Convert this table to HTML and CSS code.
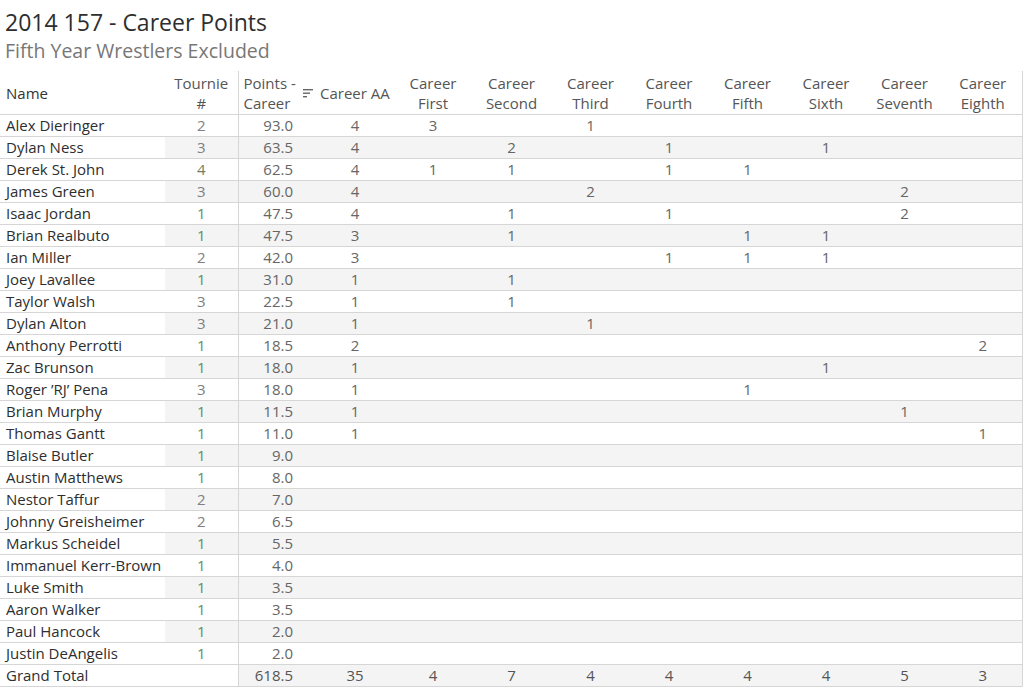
FILE: index.html
```html
<!DOCTYPE html>
<html>
<head>
<meta charset="utf-8">
<link rel="stylesheet" href="styles.css">
</head>
<body>
<div class="titles">
  <div class="title">2014 157 - Career Points</div>
  <div class="subtitle">Fifth Year Wrestlers Excluded</div>
</div>
<table class="grid">
  <colgroup>
    <col style="width:165px"><col style="width:73px"><col style="width:78px"><col style="width:78px">
    <col style="width:78px"><col style="width:79px"><col style="width:79px"><col style="width:78px">
    <col style="width:79px"><col style="width:78px"><col style="width:79px"><col style="width:78px">
  </colgroup>
  <thead>
    <tr>
      <th class="h-name">Name</th>
      <th class="h-c">Tournie<br>#</th>
      <th class="h-pts sep">Points -<br>Career</th>
      <th class="h-aa"><span class="aa-inner"><span class="sort"><svg width="11" height="9" viewBox="0 0 11 9"><rect x="0" y="0" width="10" height="1.4" fill="#666"/><rect x="0" y="3.5" width="7" height="1.4" fill="#666"/><rect x="0" y="7" width="4" height="1.4" fill="#666"/></svg></span>Career AA</span></th>
      <th class="h-c">Career<br>First</th>
      <th class="h-c">Career<br>Second</th>
      <th class="h-c">Career<br>Third</th>
      <th class="h-c">Career<br>Fourth</th>
      <th class="h-c">Career<br>Fifth</th>
      <th class="h-c">Career<br>Sixth</th>
      <th class="h-c">Career<br>Seventh</th>
      <th class="h-c last">Career<br>Eighth</th>
    </tr>
  </thead>
  <tbody>
    <tr><td class="name">Alex Dieringer</td><td class="t t2">2</td><td class="pts">93.0</td><td class="v">4</td><td class="v">3</td><td class="v"></td><td class="v">1</td><td class="v"></td><td class="v"></td><td class="v"></td><td class="v"></td><td class="v last"></td></tr>
    <tr class="band"><td class="name">Dylan Ness</td><td class="t t3">3</td><td class="pts">63.5</td><td class="v">4</td><td class="v"></td><td class="v">2</td><td class="v"></td><td class="v">1</td><td class="v"></td><td class="v">1</td><td class="v"></td><td class="v last"></td></tr>
    <tr><td class="name">Derek St. John</td><td class="t t4">4</td><td class="pts">62.5</td><td class="v">4</td><td class="v">1</td><td class="v">1</td><td class="v"></td><td class="v">1</td><td class="v">1</td><td class="v"></td><td class="v"></td><td class="v last"></td></tr>
    <tr class="band"><td class="name">James Green</td><td class="t t3">3</td><td class="pts">60.0</td><td class="v">4</td><td class="v"></td><td class="v"></td><td class="v">2</td><td class="v"></td><td class="v"></td><td class="v"></td><td class="v">2</td><td class="v last"></td></tr>
    <tr><td class="name">Isaac Jordan</td><td class="t t1">1</td><td class="pts">47.5</td><td class="v">4</td><td class="v"></td><td class="v">1</td><td class="v"></td><td class="v">1</td><td class="v"></td><td class="v"></td><td class="v">2</td><td class="v last"></td></tr>
    <tr class="band"><td class="name">Brian Realbuto</td><td class="t t1">1</td><td class="pts">47.5</td><td class="v">3</td><td class="v"></td><td class="v">1</td><td class="v"></td><td class="v"></td><td class="v">1</td><td class="v">1</td><td class="v"></td><td class="v last"></td></tr>
    <tr><td class="name">Ian Miller</td><td class="t t2">2</td><td class="pts">42.0</td><td class="v">3</td><td class="v"></td><td class="v"></td><td class="v"></td><td class="v">1</td><td class="v">1</td><td class="v">1</td><td class="v"></td><td class="v last"></td></tr>
    <tr class="band"><td class="name">Joey Lavallee</td><td class="t t1">1</td><td class="pts">31.0</td><td class="v">1</td><td class="v"></td><td class="v">1</td><td class="v"></td><td class="v"></td><td class="v"></td><td class="v"></td><td class="v"></td><td class="v last"></td></tr>
    <tr><td class="name">Taylor Walsh</td><td class="t t3">3</td><td class="pts">22.5</td><td class="v">1</td><td class="v"></td><td class="v">1</td><td class="v"></td><td class="v"></td><td class="v"></td><td class="v"></td><td class="v"></td><td class="v last"></td></tr>
    <tr class="band"><td class="name">Dylan Alton</td><td class="t t3">3</td><td class="pts">21.0</td><td class="v">1</td><td class="v"></td><td class="v"></td><td class="v">1</td><td class="v"></td><td class="v"></td><td class="v"></td><td class="v"></td><td class="v last"></td></tr>
    <tr><td class="name">Anthony Perrotti</td><td class="t t1">1</td><td class="pts">18.5</td><td class="v">2</td><td class="v"></td><td class="v"></td><td class="v"></td><td class="v"></td><td class="v"></td><td class="v"></td><td class="v"></td><td class="v last">2</td></tr>
    <tr class="band"><td class="name">Zac Brunson</td><td class="t t1">1</td><td class="pts">18.0</td><td class="v">1</td><td class="v"></td><td class="v"></td><td class="v"></td><td class="v"></td><td class="v"></td><td class="v">1</td><td class="v"></td><td class="v last"></td></tr>
    <tr><td class="name">Roger ’RJ’ Pena</td><td class="t t3">3</td><td class="pts">18.0</td><td class="v">1</td><td class="v"></td><td class="v"></td><td class="v"></td><td class="v"></td><td class="v">1</td><td class="v"></td><td class="v"></td><td class="v last"></td></tr>
    <tr class="band"><td class="name">Brian Murphy</td><td class="t t1">1</td><td class="pts">11.5</td><td class="v">1</td><td class="v"></td><td class="v"></td><td class="v"></td><td class="v"></td><td class="v"></td><td class="v"></td><td class="v">1</td><td class="v last"></td></tr>
    <tr><td class="name">Thomas Gantt</td><td class="t t1">1</td><td class="pts">11.0</td><td class="v">1</td><td class="v"></td><td class="v"></td><td class="v"></td><td class="v"></td><td class="v"></td><td class="v"></td><td class="v"></td><td class="v last">1</td></tr>
    <tr class="band"><td class="name">Blaise Butler</td><td class="t t1">1</td><td class="pts">9.0</td><td class="v"></td><td class="v"></td><td class="v"></td><td class="v"></td><td class="v"></td><td class="v"></td><td class="v"></td><td class="v"></td><td class="v last"></td></tr>
    <tr><td class="name">Austin Matthews</td><td class="t t1">1</td><td class="pts">8.0</td><td class="v"></td><td class="v"></td><td class="v"></td><td class="v"></td><td class="v"></td><td class="v"></td><td class="v"></td><td class="v"></td><td class="v last"></td></tr>
    <tr class="band"><td class="name">Nestor Taffur</td><td class="t t2">2</td><td class="pts">7.0</td><td class="v"></td><td class="v"></td><td class="v"></td><td class="v"></td><td class="v"></td><td class="v"></td><td class="v"></td><td class="v"></td><td class="v last"></td></tr>
    <tr><td class="name">Johnny Greisheimer</td><td class="t t2">2</td><td class="pts">6.5</td><td class="v"></td><td class="v"></td><td class="v"></td><td class="v"></td><td class="v"></td><td class="v"></td><td class="v"></td><td class="v"></td><td class="v last"></td></tr>
    <tr class="band"><td class="name">Markus Scheidel</td><td class="t t1">1</td><td class="pts">5.5</td><td class="v"></td><td class="v"></td><td class="v"></td><td class="v"></td><td class="v"></td><td class="v"></td><td class="v"></td><td class="v"></td><td class="v last"></td></tr>
    <tr><td class="name">Immanuel Kerr-Brown</td><td class="t t1">1</td><td class="pts">4.0</td><td class="v"></td><td class="v"></td><td class="v"></td><td class="v"></td><td class="v"></td><td class="v"></td><td class="v"></td><td class="v"></td><td class="v last"></td></tr>
    <tr class="band"><td class="name">Luke Smith</td><td class="t t1">1</td><td class="pts">3.5</td><td class="v"></td><td class="v"></td><td class="v"></td><td class="v"></td><td class="v"></td><td class="v"></td><td class="v"></td><td class="v"></td><td class="v last"></td></tr>
    <tr><td class="name">Aaron Walker</td><td class="t t1">1</td><td class="pts">3.5</td><td class="v"></td><td class="v"></td><td class="v"></td><td class="v"></td><td class="v"></td><td class="v"></td><td class="v"></td><td class="v"></td><td class="v last"></td></tr>
    <tr class="band"><td class="name">Paul Hancock</td><td class="t t1">1</td><td class="pts">2.0</td><td class="v"></td><td class="v"></td><td class="v"></td><td class="v"></td><td class="v"></td><td class="v"></td><td class="v"></td><td class="v"></td><td class="v last"></td></tr>
    <tr><td class="name">Justin DeAngelis</td><td class="t t1">1</td><td class="pts">2.0</td><td class="v"></td><td class="v"></td><td class="v"></td><td class="v"></td><td class="v"></td><td class="v"></td><td class="v"></td><td class="v"></td><td class="v last"></td></tr>
    <tr class="band total"><td class="name">Grand Total</td><td class="t blank"></td><td class="pts">618.5</td><td class="v">35</td><td class="v">4</td><td class="v">7</td><td class="v">4</td><td class="v">4</td><td class="v">4</td><td class="v">4</td><td class="v">5</td><td class="v last">3</td></tr>
  </tbody>
</table>
</body>
</html>
```

FILE: styles.css
```css
html, body {
  margin: 0;
  padding: 0;
  background: #ffffff;
}
body {
  font-family: "Open Sans", "Noto Sans", sans-serif;
  width: 1024px;
  height: 688px;
  overflow: hidden;
}
.titles {
  padding: 7px 0 0 5px;
  height: 71px;
  box-sizing: border-box;
}
.title {
  font-size: 23px;
  line-height: 30px;
  color: #2e2e2e;
}
.subtitle {
  font-size: 19.5px;
  line-height: 28px;
  color: #777777;
}
.grid {
  border-collapse: collapse;
  table-layout: fixed;
  width: 1022px;
  font-size: 15px;
}
.grid th {
  font-weight: normal;
  color: #555555;
  height: 43px;
  line-height: 20px;
  padding: 0;
  border-bottom: 1px solid #d6d6d6;
  vertical-align: middle;
}
.grid td {
  height: 21px;
  line-height: 21px;
  padding: 0;
  border-bottom: 1px solid #d6d6d6;
  color: #666666;
  white-space: nowrap;
}
.h-name {
  text-align: left;
  padding-left: 6px !important;
  color: #333333 !important;
}
.h-c { text-align: center; }
.h-pts {
  text-align: left;
  padding-left: 5px !important;
}
.h-aa {
  text-align: left;
  padding-left: 0 !important;
  white-space: nowrap;
  overflow: visible;
}
.aa-inner {
  display: inline-block;
  margin-left: -13px;
}
.sort {
  display: inline-block;
  margin-right: 6px;
  vertical-align: 1px;
}
.sep, .pts { border-left: 1px solid #d6d6d6; }
.last { border-right: 1px solid #d6d6d6; }
.name {
  padding-left: 6px !important;
  color: #2e2e2e !important;
  overflow: hidden;
}
.t { text-align: center; }
.t1 { color: #5f8f5f !important; }
.t2, .t3 { color: #808080 !important; }
.t4 { color: #6f7f66 !important; }
.pts {
  text-align: right;
  padding-right: 23px !important;
}
.v { text-align: center; }
.band td { background: #f4f4f4; }
.band td.name { background: #ffffff; }
.total td.blank { background: #ffffff; }
.total td { color: #555555; }
```
